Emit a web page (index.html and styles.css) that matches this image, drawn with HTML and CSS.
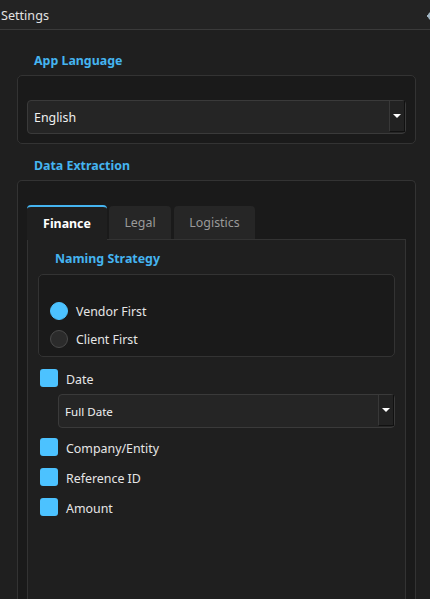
FILE: index.html
```html
<!DOCTYPE html>
<html>
<head>
  <meta charset="UTF-8">
  <title>Settings</title>
  <link rel="stylesheet" href="styles.css">
</head>
<body>

  <div class="titlebar">
    <span class="title">Settings</span>
    <svg class="pin" width="10" height="10" viewBox="0 0 10 10">
      <circle cx="5" cy="5" r="3.2" fill="none" stroke="#9fb3c0" stroke-width="2"/>
      <rect x="4" y="0" width="2" height="10" fill="#9fb3c0"/>
      <rect x="0" y="4" width="10" height="2" fill="#9fb3c0"/>
    </svg>
  </div>

  <div class="page">
    <h3 class="heading">App Language</h3>
    <div class="group">
      <div class="select">
        <span class="value">English</span>
        <span class="arrow"><i></i></span>
      </div>
    </div>

    <h3 class="heading">Data Extraction</h3>
    <div class="group group-tabs">
      <div class="tabs">
        <div class="tab active">Finance</div>
        <div class="tab">Legal</div>
        <div class="tab">Logistics</div>
      </div>
      <div class="pane">
        <h4 class="subheading">Naming Strategy</h4>
        <div class="radio-box">
          <div class="radio checked"><span class="dot"></span>Vendor First</div>
          <div class="radio"><span class="dot"></span>Client First</div>
        </div>

        <div class="check"><span class="box"></span><span class="label">Date</span></div>
        <div class="select select-small">
          <span class="value">Full Date</span>
          <span class="arrow"><i></i></span>
        </div>
        <div class="check"><span class="box"></span><span class="label">Company/Entity</span></div>
        <div class="check"><span class="box"></span><span class="label">Reference ID</span></div>
        <div class="check"><span class="box"></span><span class="label">Amount</span></div>
      </div>
    </div>
  </div>

</body>
</html>
```

FILE: styles.css
```css
html, body { margin: 0; padding: 0; }
body { background: #1f1f1f; color: #e6e6e6; font-family: "Noto Sans", "Open Sans", sans-serif; font-size: 12.4px; width: 430px; height: 599px; overflow: hidden; }

.titlebar { height: 29px; background: #232323; border-bottom: 1px solid #3a3a3a; display: flex; align-items: center; justify-content: space-between; overflow: hidden; }
.titlebar .title { padding: 2px 0 0 1px; color: #e2e2e2; font-size: 12.6px; }
.titlebar .pin { margin: 2px -7px 0 0; }

.page { padding: 0 14px 0 17px; }
.heading { margin: 22px 0 5px 17px; font-size: 12.4px; line-height: 18px; font-weight: bold; color: #45b4f0; }
.group + .heading { margin-top: 13px; }

.group { background: #1a1a1a; border: 1px solid #333; border-radius: 5px; padding: 24px 9px 9px 9px; }
.group-tabs { padding-bottom: 0; border-bottom: none; }

.select { height: 34px; box-sizing: border-box; background: #252525; border: 1px solid #3a3a3a; border-radius: 4px; display: flex; align-items: stretch; }
.select .value { flex: 1; padding: 1px 0 0 6px; display: flex; align-items: center; color: #f0f0f0; }
.select .arrow { width: 14px; margin: 0 0 1px 0; background: #222; border-left: 1px solid #383838; border-right: 1px solid #111; border-bottom: 1px solid #111; display: flex; align-items: center; justify-content: center; }
.select .arrow i { width: 0; height: 0; border-left: 4px solid transparent; border-right: 4px solid transparent; border-top: 4px solid #fff; }

.tabs { display: flex; gap: 2px; }
.tab { height: 33px; box-sizing: border-box; display: flex; align-items: center; justify-content: center; background: #262626; color: #9a9a9a; border-radius: 4px 4px 0 0; margin-top: 1px; }
.tab.active { width: 80px; margin-top: 0; height: 35px; margin-bottom: -1px; background: #1f1f1f; color: #fff; font-weight: bold; border-top: 2px solid #45b4f0; position: relative; z-index: 1; }
.tab:nth-child(2) { width: 62px; }
.tab:nth-child(3) { width: 81px; margin-left: 1px; }

.pane { background: #1f1f1f; border: 1px solid #333; border-bottom: none; padding: 10px 10px 0 10px; min-height: 400px; }
.subheading { margin: 0 0 6px 17px; font-size: 12.4px; line-height: 18px; font-weight: bold; color: #45b4f0; }

.radio-box { background: #1a1a1a; border: 1px solid #333; border-radius: 5px; padding: 22px 11px 3px 11px; }
.radio { height: 28px; display: flex; align-items: center; color: #e6e6e6; }
.radio .dot { width: 16px; height: 16px; border-radius: 50%; background: #2b2b2b; border: 1px solid #4a4a4a; margin-right: 8px; }
.radio.checked .dot { background: #4cc2ff; border-color: #4cc2ff; }

.check { height: 18px; display: flex; align-items: center; margin: 12px 0 0 2px; color: #e6e6e6; }
.check .box { width: 18px; height: 18px; border-radius: 3px; background: #4cc2ff; margin-right: 8px; }
.check .label { position: relative; top: 1px; }
.select-small { margin: 7px 0 0 20px; height: 34px; }
.select-small .value { font-size: 11.6px; }
.select-small + .check { margin-top: 10px; }
```
